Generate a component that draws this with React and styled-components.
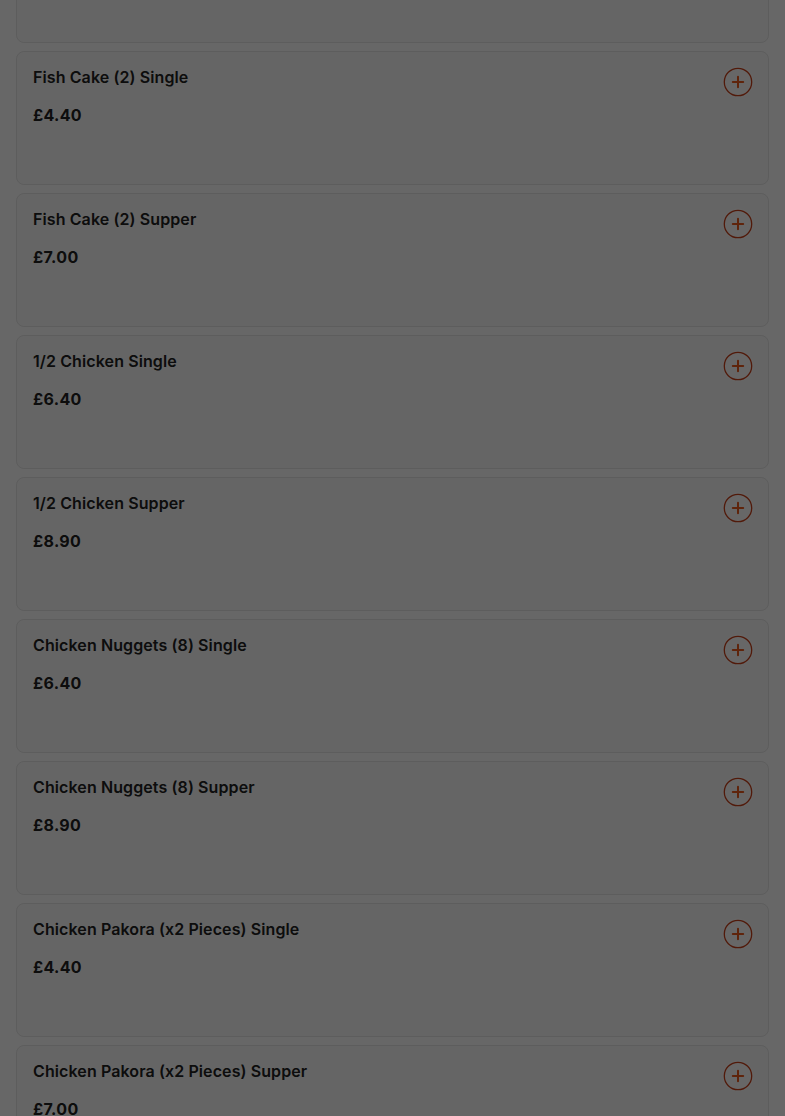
import React from 'react';
import styled, { createGlobalStyle } from 'styled-components';

const GlobalStyle = createGlobalStyle`
	* { box-sizing: border-box; }
	body {
		margin: 0;
		background: #ffffff;
		font-family: Inter, "Liberation Sans", sans-serif;
		color: #222222;
		overflow: hidden;
	}
`;

const Page = styled.div`
	height: 1116px;
	overflow: hidden;
	padding: 0 16px;
`;

const List = styled.ul`
	list-style: none;
	margin: -91px 0 0;
	padding: 0;
	display: flex;
	flex-direction: column;
	gap: 8px;
`;

const Card = styled.li`
	height: 134px;
	border: 1px solid #e6e6e6;
	border-radius: 8px;
	background: #fbfbfb;
	padding: 15px 16px 16px;
	display: flex;
	justify-content: space-between;
	align-items: flex-start;
`;

const Info = styled.div`
	display: flex;
	flex-direction: column;
	gap: 18px;
`;

const Title = styled.h3`
	margin: 0;
	font-size: 16px;
	line-height: 20px;
	font-weight: 600;
	letter-spacing: 0.1px;
`;

const Price = styled.span`
	font-size: 16px;
	line-height: 20px;
	font-weight: 700;
	letter-spacing: 0.3px;
`;

const AddButton = styled.button`
	width: 30px;
	height: 30px;
	margin: 0 -1px 0 0;
	padding: 0;
	border: none;
	background: #ffffff;
	border-radius: 50%;
	display: flex;
	align-items: center;
	justify-content: center;
	cursor: pointer;
	box-shadow: 0 0 4px rgba(255, 255, 255, 0.6);
`;

const Overlay = styled.div`
	position: fixed;
	inset: 0;
	background: rgba(0, 0, 0, 0.595);
`;

const items = [
	{ name: 'Fish Cake (2) Single', price: '£4.40' },
	{ name: 'Fish Cake (2) Supper', price: '£7.00' },
	{ name: '1/2 Chicken Single', price: '£6.40' },
	{ name: '1/2 Chicken Supper', price: '£8.90' },
	{ name: 'Chicken Nuggets (8) Single', price: '£6.40' },
	{ name: 'Chicken Nuggets (8) Supper', price: '£8.90' },
	{ name: 'Chicken Pakora (x2 Pieces) Single', price: '£4.40' },
	{ name: 'Chicken Pakora (x2 Pieces) Supper', price: '£7.00' },
];

function PlusIcon() {
	return (
		<svg width="30" height="30" viewBox="0 0 30 30" fill="none">
			<circle cx="15" cy="15" r="13.7" stroke="#c8401a" strokeWidth="1.3" />
			<path d="M15 9.8v10.4M9.8 15h10.4" stroke="#ea5a1c" strokeWidth="2" strokeLinecap="round" />
		</svg>
	);
}

export default function App() {
	return (
		<>
			<GlobalStyle />
			<Page>
				<List>
					{/* tail of the card scrolled above the top edge */}
					<Card aria-hidden="true" />
					{items.map((item) => (
						<Card key={item.name}>
							<Info>
								<Title>{item.name}</Title>
								<Price>{item.price}</Price>
							</Info>
							<AddButton aria-label={`Add ${item.name}`}>
								<PlusIcon />
							</AddButton>
						</Card>
					))}
				</List>
			</Page>
			<Overlay />
		</>
	);
}
